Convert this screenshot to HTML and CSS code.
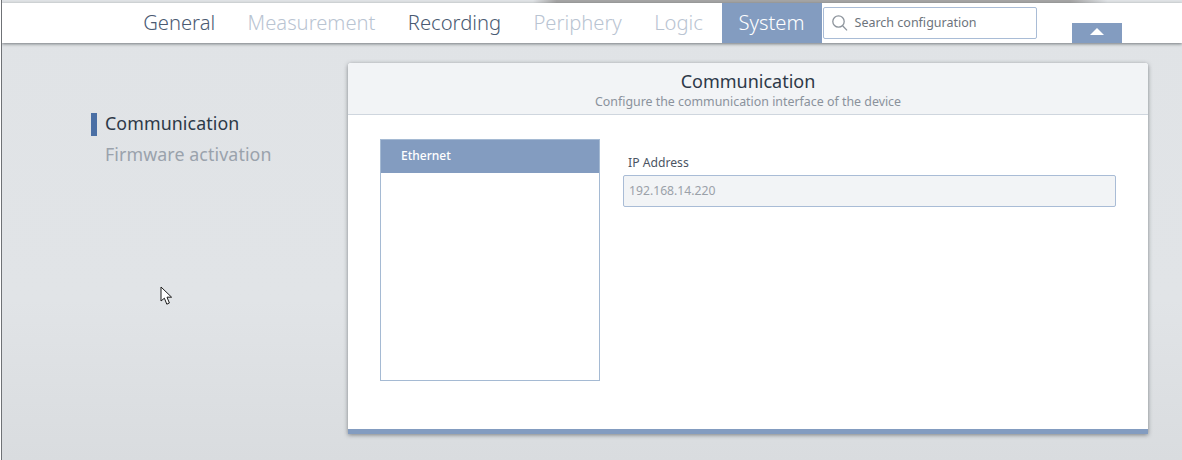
FILE: index.html
```html
<!DOCTYPE html>
<html lang="en">
<head>
<meta charset="utf-8">
<title>Configuration</title>
<link rel="stylesheet" href="styles.css">
</head>
<body>
<div class="app">
  <div class="strip"></div>
  <header class="navbar">
    <nav class="tabs">
      <a class="tab dark">General</a>
      <a class="tab">Measurement</a>
      <a class="tab dark">Recording</a>
      <a class="tab">Periphery</a>
      <a class="tab">Logic</a>
      <a class="tab active">System</a>
    </nav>
    <div class="search">
      <svg class="search-icon" width="18" height="18" viewBox="0 0 18 18" fill="none" stroke="#8d949c" stroke-width="1.3"><circle cx="7.5" cy="7.5" r="5.7"/><path d="M11.6 11.8 16 16.4"/></svg>
      <span class="search-text">Search configuration</span>
    </div>
    <button class="collapse" type="button"><svg width="14" height="7" viewBox="0 0 14 7"><path d="M7 0 14 7H0Z" fill="#fff"/></svg></button>
  </header>
  <main class="main">
    <aside class="side">
      <div class="side-item current">Communication</div>
      <div class="side-item">Firmware activation</div>
    </aside>
    <section class="card">
      <div class="card-head">
        <h1 class="card-title">Communication</h1>
        <p class="card-sub">Configure the communication interface of the device</p>
      </div>
      <div class="card-body">
        <div class="list">
          <div class="list-head">Ethernet</div>
        </div>
        <div class="form">
          <label class="label">IP Address</label>
          <div class="input">192.168.14.220</div>
        </div>
      </div>
    </section>
  </main>
  <svg class="cursor" width="14" height="20" viewBox="0 0 14 20"><path d="M1 1V15L4.4 12.2 6.8 18.2 9.4 17 7 11.2H11.6Z" fill="#fff" stroke="#1c1c1c" stroke-width="1"/></svg>
</div>
</body>
</html>
```

FILE: styles.css
```css
* { box-sizing: border-box; }
html, body { margin: 0; padding: 0; }
body { font-family: "Noto Sans", "Liberation Sans", sans-serif; overflow: hidden; background: #fff; }
.app {
  position: relative;
  width: 1181px;
  height: 460px;
  margin-left: 1px;
  border-left: 1px solid #6f7276;
  background: linear-gradient(180deg, #e0e3e6 0%, #e1e4e7 65%, #d9dcdf 100%);
  overflow: hidden;
}
.strip {
  height: 3px;
  background: linear-gradient(90deg, #e0e3e6 0, #e0e3e6 45%, #a5a5a5 47%, #a5a5a5 90.5%, #e0e3e6 93.7%);
}
.navbar {
  position: relative;
  display: flex;
  align-items: flex-start;
  height: 40px;
  padding-left: 125px;
  background: #fff;
  box-shadow: 0 1px 3px rgba(60, 65, 70, .65);
}
.tabs { display: flex; height: 40px; }
.tab {
  padding: 0 16.2px;
  font-size: 20.2px;
  font-weight: 300;
  line-height: 39px;
  color: #b9c4d2;
}
.tab.dark { color: #4a5a72; }
.tab.active { margin-left: 2.4px; padding: 0 17px; background: #839cc0; color: #fff; }
.search {
  display: flex;
  align-items: center;
  width: 214px;
  height: 32px;
  margin: 4px 0 0 1px;
  padding: 0 0 1px 7px;
  background: #fff;
  border: 1px solid #a9bcd6;
  border-radius: 2px;
}
.search-icon { flex: none; }
.search-text { margin-left: 6px; font-size: 12.5px; color: #6d747c; }
.collapse {
  display: flex;
  align-items: center;
  justify-content: center;
  width: 50px;
  height: 20px;
  margin: 20px 0 0 35px;
  padding: 0 0 4px;
  background: #839cc0;
  border: 0;
}
.main { display: flex; align-items: flex-start; padding: 20px 0 0 89px; }
.side { width: 257px; padding-top: 50px; }
.side-item {
  height: 23px;
  margin-bottom: 8px;
  font-size: 17.8px;
  line-height: 20px;
  letter-spacing: .1px;
  color: #9aa2ac;
}
.side-item.current { border-left: 6px solid #4a6fa5; padding-left: 8px; color: #2d3948; }
.side-item:not(.current) { padding-left: 14px; }
.card {
  width: 800px;
  height: 371px;
  background: #fff;
  border-bottom: 5px solid #839cc0;
  border-radius: 3px 3px 0 0;
  box-shadow: 0 1px 4px rgba(60, 65, 70, .6);
}
.card-head {
  height: 52px;
  padding-top: 7px;
  text-align: center;
  background: #f2f4f6;
  border-bottom: 1px solid #cfd6de;
  border-radius: 3px 3px 0 0;
}
.card-title { margin: 0; font-size: 18px; font-weight: 400; line-height: 23px; color: #2d3948; }
.card-sub { margin: 0; font-size: 12.4px; line-height: 17px; color: #8a929c; }
.card-body { display: flex; padding: 24px 32px 0; }
.list {
  width: 220px;
  height: 242px;
  border: 1px solid #a5bad3;
}
.list-head {
  height: 33px;
  padding-left: 20px;
  font-size: 12px;
  font-weight: 500;
  line-height: 31px;
  color: #fff;
  background: #839cc0;
}
.form { display: flex; flex-direction: column; width: 493px; margin-left: 23px; }
.label { padding: 15px 0 0 5px; font-size: 12.2px; line-height: 17px; color: #4b5563; }
.input {
  height: 32px;
  margin-top: 4px;
  padding-left: 5px;
  font-size: 12.2px;
  line-height: 30px;
  color: #9ba1a9;
  background: #f2f4f6;
  border: 1px solid #a9bcd6;
  border-radius: 2px;
}
.cursor { position: absolute; left: 158px; top: 286px; }
```
